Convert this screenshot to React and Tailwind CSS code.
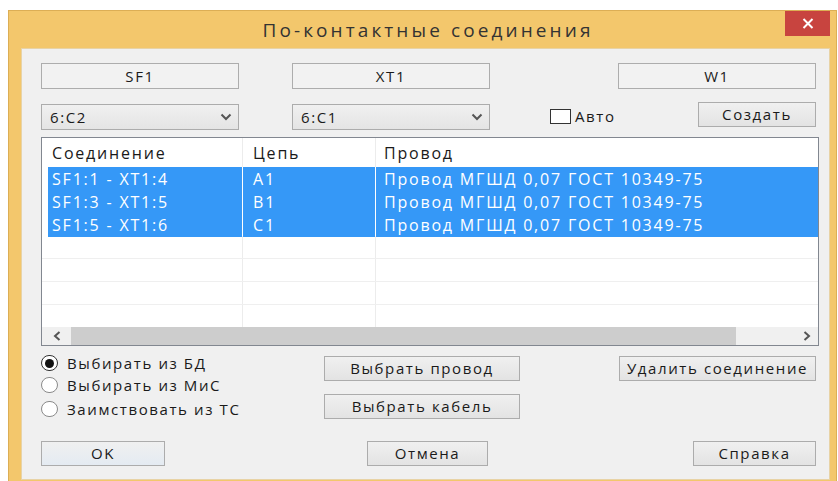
import React from "react";

const font = { fontFamily: '"Open Sans", "Noto Sans", sans-serif' };

function Chevron({ className = "" }) {
  return (
    <svg width="12" height="8" viewBox="0 0 12 8" className={className}>
      <path d="M1.5 1.5 L6 6 L10.5 1.5" fill="none" stroke="#555" strokeWidth="2" />
    </svg>
  );
}

function Button({ children, className = "" }) {
  return (
    <div
      className={`flex items-center justify-center border border-[#acacac] bg-gradient-to-b from-[#f0f0f0] to-[#e3e3e3] text-[15px] tracking-[1.6px] text-[#1a1a1a] ${className}`}
    >
      {children}
    </div>
  );
}

function LabelBox({ children }) {
  return (
    <div className="flex h-[26px] w-[198px] items-center justify-center border border-[#adadad] bg-[#f2f2f2] text-[15px] tracking-[1.6px] text-[#1a1a1a]">
      {children}
    </div>
  );
}

function Combo({ value }) {
  return (
    <div className="flex h-[26px] w-[198px] items-center justify-between border border-[#acacac] bg-gradient-to-b from-[#f0f0f0] to-[#e4e4e4] pl-[8px] pr-[6px] text-[15px] tracking-[1.6px] text-[#1a1a1a]">
      <span>{value}</span>
      <Chevron />
    </div>
  );
}

function Radio({ checked, label }) {
  return (
    <div className="flex h-[22px] items-center gap-[9px] text-[15px] tracking-[1.6px] text-[#1a1a1a]">
      <div
        className={`flex h-[16px] w-[17px] items-center justify-center rounded-full border bg-white ${
          checked ? "border-[#333]" : "border-[#8a8a8a]"
        }`}
      >
        {checked && <div className="h-[9px] w-[9px] rounded-full bg-[#111]" />}
      </div>
      <span>{label}</span>
    </div>
  );
}

const rows = [
  ["SF1:1 - XT1:4", "A1", "Провод МГШД 0,07 ГОСТ 10349-75"],
  ["SF1:3 - XT1:5", "B1", "Провод МГШД 0,07 ГОСТ 10349-75"],
  ["SF1:5 - XT1:6", "C1", "Провод МГШД 0,07 ГОСТ 10349-75"],
];

export default function App() {
  return (
    <div className="h-[481px] w-[838px] overflow-hidden bg-white pl-[8px] pt-[10px]" style={font}>
      {/* window frame */}
      <div className="flex h-[472px] w-[829px] flex-col border border-[#dcae55] bg-[#f3c76c] pb-[1px] pl-[12px] pr-[6px]">
        {/* title bar */}
        <div className="flex h-[37px] shrink-0">
          <div className="flex flex-1 items-center justify-center pl-[50px] pt-[1px] text-[19px] tracking-[3.1px] text-[#333]">
            По-контактные соединения
          </div>
          <div className="flex h-[25px] w-[45px] items-center justify-center bg-[#c8443f]">
            <svg width="12" height="11" viewBox="0 0 12 11">
              <path d="M1.5 1 L10.5 10 M10.5 1 L1.5 10" stroke="#fff" strokeWidth="2" />
            </svg>
          </div>
        </div>

        {/* client area */}
        <div className="flex flex-1 flex-col border border-[#e8d3a6] bg-[#f0f0f0] pl-[19px] pr-[13px] pt-[14px]">
          {/* component labels */}
          <div className="flex">
            <LabelBox>SF1</LabelBox>
            <div className="ml-[53px]">
              <LabelBox>XT1</LabelBox>
            </div>
            <div className="ml-auto">
              <LabelBox>W1</LabelBox>
            </div>
          </div>

          {/* pin selectors */}
          <div className="mt-[15px] flex items-start">
            <Combo value="6:C2" />
            <div className="ml-[53px]">
              <Combo value="6:C1" />
            </div>
            <div className="ml-[60px] mt-[1px] flex items-center gap-[4px] text-[15px] tracking-[1.6px] text-[#1a1a1a]">
              <div className="h-[15px] w-[21px] border border-[#333] bg-white" />
              <span>Авто</span>
            </div>
            <Button className="ml-auto mt-[-2px] h-[25px] w-[118px]">Создать</Button>
          </div>

          {/* connection list */}
          <div className="mr-[-3px] mt-[7px] flex h-[209px] flex-col border border-[#828790] bg-white text-[16px] tracking-[1.8px]">
            <div className="grid h-[29px] shrink-0 grid-cols-[201px_133px_1fr] text-[#1a1a1a]">
              <div className="flex items-center border-r border-[#ececec] pl-[10px]">Соединение</div>
              <div className="flex items-center border-r border-[#ececec] pl-[10px]">Цепь</div>
              <div className="flex items-center pl-[8px]">Провод</div>
            </div>
            <div className="flex-1 overflow-hidden">
              {rows.map((r) => (
                <div key={r[0]} className="grid h-[23px] grid-cols-[201px_133px_1fr]">
                  <div className="flex border-r border-white pl-[6px]">
                    <div className="flex flex-1 items-center border-b border-white bg-[#3598f7] pl-[4px] text-white">
                      {r[0]}
                    </div>
                  </div>
                  <div className="flex items-center border-b border-r border-white bg-[#3598f7] pl-[10px] text-white">
                    {r[1]}
                  </div>
                  <div className="flex items-center border-b border-white bg-[#3598f7] pl-[8px] text-white">
                    {r[2]}
                  </div>
                </div>
              ))}
              {[0, 1, 2, 3].map((i) => (
                <div key={i} className="grid h-[23px] grid-cols-[201px_133px_1fr] border-b border-[#efefef]">
                  <div className="border-r border-[#ececec]" />
                  <div className="border-r border-[#ececec]" />
                  <div />
                </div>
              ))}
            </div>
            {/* horizontal scrollbar */}
            <div className="flex h-[18px] shrink-0 items-center bg-[#f0f0f0]">
              <div className="flex w-[29px] items-center justify-center">
                <svg width="8" height="10" viewBox="0 0 8 10">
                  <path d="M6.5 1 L2 5 L6.5 9" fill="none" stroke="#555" strokeWidth="2" />
                </svg>
              </div>
              <div className="h-[18px] w-[665px] bg-[#cdcdcd]" />
              <div className="flex-1" />
              <div className="flex w-[22px] items-center justify-center">
                <svg width="8" height="10" viewBox="0 0 8 10">
                  <path d="M1.5 1 L6 5 L1.5 9" fill="none" stroke="#555" strokeWidth="2" />
                </svg>
              </div>
            </div>
          </div>

          {/* source options and actions */}
          <div className="mt-[6px] flex">
            <div className="flex w-[283px] flex-col">
              <Radio checked label="Выбирать из БД" />
              <Radio label="Выбирать из МиС" />
              <div className="mt-[2px]">
                <Radio label="Заимствовать из ТС" />
              </div>
            </div>
            <div className="flex flex-col gap-[13px] pt-[4px]">
              <Button className="h-[25px] w-[196px]">Выбрать провод</Button>
              <Button className="h-[25px] w-[196px]">Выбрать кабель</Button>
            </div>
            <div className="ml-auto pt-[4px]">
              <Button className="h-[25px] w-[197px]">Удалить соединение</Button>
            </div>
          </div>

          {/* dialog buttons */}
          <div className="mt-[21px] flex">
            <Button className="h-[25px] w-[124px] border-[#3c8fd9] from-[#eef3f8] to-[#e4ebf2]">OK</Button>
            <Button className="ml-[202px] h-[25px] w-[121px]">Отмена</Button>
            <Button className="ml-auto h-[25px] w-[123px]">Справка</Button>
          </div>
        </div>
      </div>
    </div>
  );
}
